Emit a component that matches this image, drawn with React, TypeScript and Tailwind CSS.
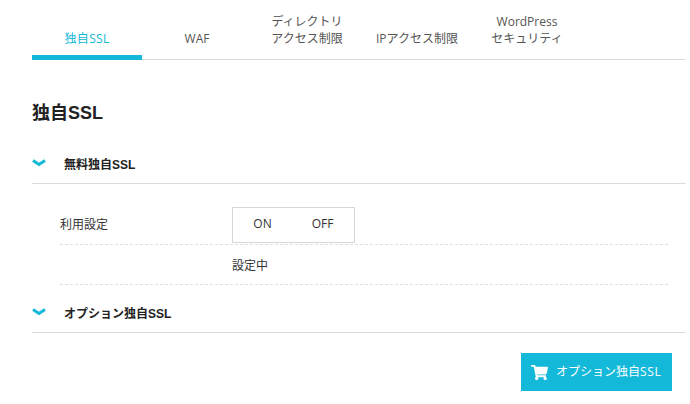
import React from 'react';
import { FaShoppingCart } from 'react-icons/fa';

const tabs = [
  { lines: ['独自SSL'], active: true },
  { lines: ['WAF'] },
  { lines: ['ディレクトリ', 'アクセス制限'] },
  { lines: ['IPアクセス制限'] },
  { lines: ['WordPress', 'セキュリティ'] },
];

const boldFont = { fontFamily: '"Liberation Sans", "Noto Sans CJK JP", sans-serif' };

const Chevron = () => (
  <svg width="14" height="8" viewBox="0 0 14 8" className="shrink-0 -mt-[1px]">
    <path d="M1 1.5 L7 5.5 L13 1.5" fill="none" stroke="#14b8d9" strokeWidth="3" />
  </svg>
);

const SectionHeader = ({ title, className }: { title: string; className: string }) => (
  <div className={`flex items-center border-b border-[#dcdcdc] ${className}`}>
    <div className="w-[32px]"><Chevron /></div>
    <h3 className="text-[12px] font-bold text-[#222] pt-[2px]" style={boldFont}>{title}</h3>
  </div>
);

export default function App() {
  return (
    <div
      className="w-[690px] h-[404px] overflow-hidden bg-white pl-[32px] pr-[4px] text-[12px] text-[#333]"
      style={{ fontFamily: '"Open Sans", "Noto Sans CJK JP", sans-serif' }}
    >
      <div className="flex h-[60px] border-b border-[#dcdcdc]">
        {tabs.map((tab) => (
          <div
            key={tab.lines[0]}
            className={`w-[110px] h-[60px] flex flex-col justify-end text-center text-[12px] leading-[17px] ${
              tab.active ? 'border-b-[5px] border-[#14b8d9] text-[#14b8d9] pb-[8px] tracking-[0.3px]' : 'text-[#555] pb-[13px]'
            }`}
          >
            {tab.lines.map((line) => (
              <div key={line}>{line}</div>
            ))}
          </div>
        ))}
      </div>

      <h2 className="mt-[40px] h-[26px] leading-[26px] text-[18px] font-bold text-[#222]" style={boldFont}>独自SSL</h2>

      <SectionHeader title="無料独自SSL" className="mt-[12px] h-[46px] pt-[6px]" />

      <div className="ml-[28px] mr-[18px] mt-[23px]">
        <div className="flex items-start h-[38px] border-b border-dashed border-[#e0e0e0]">
          <div className="w-[172px] h-[36px] leading-[36px]">利用設定</div>
          <div className="w-[123px] h-[36px] flex items-center pb-[2px] border border-[#d6d6d6] text-[#333]">
            <span className="w-[59px] text-center">ON</span>
            <span className="w-[61px] text-center">OFF</span>
          </div>
        </div>
        <div className="flex items-center h-[40px] pt-[2px] border-b border-dashed border-[#e0e0e0]">
          <div className="w-[172px]" />
          <div>設定中</div>
        </div>
      </div>

      <SectionHeader title="オプション独自SSL" className="h-[48px] pt-[8px]" />

      <div className="flex justify-end mt-[20px] pr-[14px]">
        <button className="w-[151px] h-[38px] bg-[#14b8d9] text-white flex items-center pl-[10px] gap-[8px] text-[12px]">
          <FaShoppingCart size={17} className="shrink-0" />
          <span>オプション独自<span className="tracking-[0.6px]">SSL</span></span>
        </button>
      </div>
    </div>
  );
}
